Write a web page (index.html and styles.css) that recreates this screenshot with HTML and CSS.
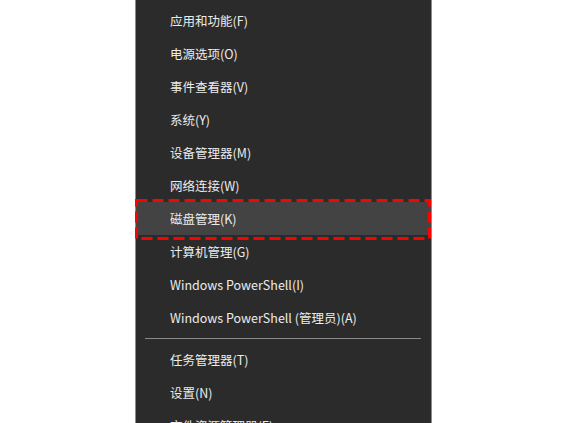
FILE: index.html
```html
<!DOCTYPE html>
<html>
<head>
    <meta charset="UTF-8">
    <link rel="stylesheet" href="styles.css">
</head>
<body>
    <div class="menu">
        <ul class="grupo">
            <li>应用和功能(F)</li>
            <li>电源选项(O)</li>
            <li>事件查看器(V)</li>
            <li>系统(Y)</li>
            <li>设备管理器(M)</li>
            <li>网络连接(W)</li>
            <li class="marcado">磁盘管理(K)
                <svg class="recuadro" width="296" height="41" viewBox="0 0 296 41">
                    <rect x="1.5" y="1.5" width="293" height="38" fill="none" stroke="#ff0000" stroke-width="3" stroke-dasharray="11 5"/>
                </svg>
            </li>
            <li>计算机管理(G)</li>
            <li>Windows PowerShell(I)</li>
            <li>Windows PowerShell (管理员)(A)</li>
        </ul>
        <div class="separador"></div>
        <ul class="grupo">
            <li>任务管理器(T)</li>
            <li>设置(N)</li>
            <li>文件资源管理器(E)</li>
        </ul>
    </div>
</body>
</html>
```

FILE: styles.css
```css
body {
    margin: 0;
    background-color: #ffffff;
    height: 423px;
    overflow: hidden;
}

.menu {
    margin-left: 135px;
    width: 295px;
    height: 460px;
    padding-top: 4px;
    background-color: #2b2b2b;
    border-left: 1px solid #8c8c8c;
    border-right: 1px solid #8c8c8c;
    font-family: "Noto Sans CJK SC", "Noto Sans", sans-serif;
    font-size: 12.5px;
    color: #ececec;
}

.grupo {
    list-style-type: none;
    margin: 0;
    padding: 0;
}

    .grupo li {
        height: 33px;
        line-height: 33px;
        padding-left: 34px;
        position: relative;
    }

    .grupo li.marcado {
        background-color: #434343;
    }

.recuadro {
    position: absolute;
    left: -1px;
    top: -3px;
}

.separador {
    height: 1px;
    margin: 4px 10px 4px 9px;
    background-color: #8a8a8a;
}
```
